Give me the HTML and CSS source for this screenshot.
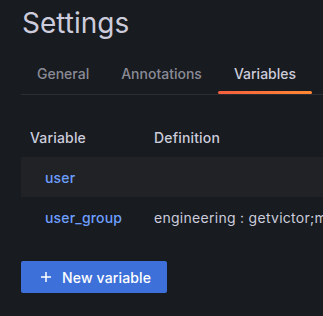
FILE: index.html
```html
<!DOCTYPE html>
<html>
<head>
<meta charset="utf-8">
<link rel="stylesheet" href="styles.css">
</head>
<body>
<div class="page">
  <h1 class="title">Settings</h1>
  <div class="tabs">
    <div class="tab">General</div>
    <div class="tab">Annotations</div>
    <div class="tab active">Variables</div>
  </div>
  <table class="vars">
    <thead>
      <tr><th class="c-name">Variable</th><th class="c-def">Definition</th></tr>
    </thead>
    <tbody>
      <tr class="odd"><td class="c-name"><span class="link">user</span></td><td class="c-def"></td></tr>
      <tr><td class="c-name"><span class="link">user_group</span></td><td class="c-def"><div class="clip">engineering : getvictor;mehdi;stuart</div></td></tr>
    </tbody>
  </table>
  <button class="btn"><svg class="plus" width="12" height="12" viewBox="0 0 12 12"><path d="M6 1v10M1 6h10" stroke="currentColor" stroke-width="1.5" fill="none"/></svg><span>New variable</span></button>
</div>
</body>
</html>
```
FILE: styles.css
```css
html, body {
  margin: 0;
  padding: 0;
  background: #181b1f;
  overflow: hidden;
}
body {
  font-family: Inter, "Liberation Sans", sans-serif;
  color: #ccccdc;
  width: 323px;
  height: 316px;
  letter-spacing: 0.01071em;
}
.page {
  padding: 6px 0 0 21px;
}
.title {
  margin: 0;
  font-size: 28px;
  font-weight: 400;
  line-height: 34px;
  color: #ccccdc;
  padding-left: 1px;
  letter-spacing: 0;
}
.tabs {
  display: flex;
  margin-top: 14px;
  border-bottom: 1px solid #2c2e33;
  width: 302px;
}
.tab {
  position: relative;
  padding: 0 16px;
  height: 40px;
  line-height: 40px;
  font-size: 14px;
  font-weight: 500;
  letter-spacing: 0;
  color: rgba(204, 204, 220, 0.65);
  white-space: nowrap;
}
.tab.active {
  color: #ccccdc;
}
.tab.active::after {
  content: "";
  position: absolute;
  left: 0;
  right: 0;
  bottom: 0;
  height: 3px;
  border-radius: 2px;
  background: linear-gradient(90deg, #f55f3e, #ff8833);
}
.vars {
  margin-top: 22px;
  border-collapse: collapse;
  width: 302px;
  table-layout: fixed;
  font-size: 14px;
}
.vars th {
  text-align: left;
  font-weight: 500;
  height: 40px;
  padding: 0;
}
.vars td {
  height: 40px;
  padding: 0;
  white-space: nowrap;
}
.vars th.c-name { padding-left: 9px; width: 124px; }
.vars td.c-name { padding-left: 24px; }
.vars .c-def { padding-left: 0; overflow: hidden; }
.clip {
  overflow: hidden;
  white-space: nowrap;
  letter-spacing: 0.02em;
}
.vars tr.odd td { background: #202226; }
.link {
  color: #6e9fff;
  font-weight: 500;
}
.btn {
  margin-top: 24px;
  display: flex;
  align-items: center;
  gap: 10px;
  height: 32px;
  padding: 0 16px 0 19px;
  border: none;
  border-radius: 2px;
  background: #3d71d9;
  color: #ffffff;
  font-family: Inter, "Liberation Sans", sans-serif;
  font-size: 14px;
  font-weight: 500;
  letter-spacing: 0.01071em;
}
.plus { display: block; }
```
